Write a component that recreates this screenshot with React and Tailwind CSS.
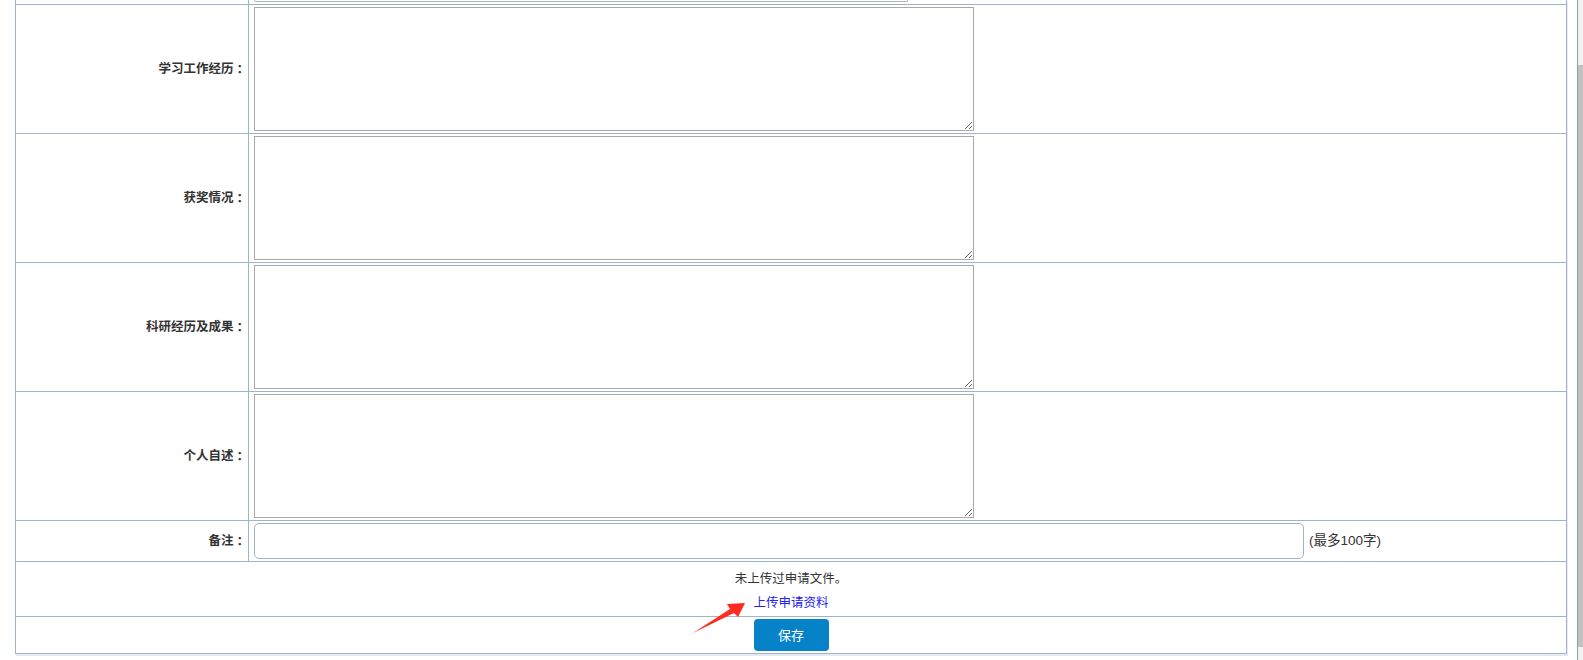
import React from 'react';

const font = { fontFamily: '"Liberation Sans", "Noto Sans CJK SC", sans-serif' };
const colonFont = { fontFamily: '"Noto Sans CJK TC", sans-serif' };

const textRows = ['学习工作经历', '获奖情况', '科研经历及成果', '个人自述'];

function Label({ children }) {
  return (
    <div className="w-[233px] shrink-0 border-r border-[#9fb3cb] flex items-center justify-end pr-[2px] text-[12.5px] font-bold text-[#333]">
      {children}
      <span style={colonFont}>：</span>
    </div>
  );
}

export default function App() {
  return (
    <div className="relative w-[1583px] h-[660px] overflow-hidden bg-white flex" style={font}>
      <div className="flex-1 pl-[15px]">
        <div className="w-[1552px] border-x border-b border-[#9fb3cb] shadow-[1px_2px_0_#e6eaf0]">
          {/* tail of the previous row */}
          <div className="flex h-[5px] border-b border-[#9fb3cb]">
            <div className="w-[233px] shrink-0 border-r border-[#9fb3cb]" />
            <div className="pl-[5px]">
              <div className="w-[654px] h-[2px] border-x border-b border-[#a4b6cc] rounded-b-[3px]" />
            </div>
          </div>

          {textRows.map((label) => (
            <div key={label} className="flex h-[129px] border-b border-[#9fb3cb]">
              <Label>{label}</Label>
              <div className="pt-[2px] pl-[5px]">
                <textarea className="block w-[720px] h-[124px] border border-[#a9a9a9] bg-white" />
              </div>
            </div>
          ))}

          <div className="flex h-[41px] border-b border-[#9fb3cb]">
            <Label>备注</Label>
            <div className="flex items-center pl-[5px]">
              <input className="w-[1050px] h-[36px] border border-[#9fb3cb] rounded-[5px] bg-white" />
              <span className="ml-[5px] text-[13.5px] text-[#333]">(最多100字)</span>
            </div>
          </div>

          <div className="h-[55px] border-b border-[#9fb3cb] pt-[5px] flex flex-col items-center text-[12.5px] leading-[24px]">
            <span className="text-[#333]">未上传过申请文件。</span>
            <a className="text-[#2222f0] cursor-pointer">上传申请资料</a>
          </div>

          <div className="h-[36px] flex items-center justify-center">
            <button className="w-[75px] h-[32px] rounded-[4px] bg-[#0682c8] text-white text-[13px] leading-none">
              保存
            </button>
          </div>
        </div>
      </div>

      {/* page scrollbar */}
      <div className="w-[6px] h-full border-l border-[#8d9db5] bg-[#f1f1f1]">
        <div className="mt-[65px] h-[582px] bg-[#c1c1c1]" />
      </div>

      {/* red annotation arrow */}
      <svg className="absolute left-0 top-0 pointer-events-none" width="1583" height="660">
        <polygon
          points="693,633 730,609 727,604 745,603 738,617 734,613"
          fill="#ff2b1c"
        />
      </svg>
    </div>
  );
}
